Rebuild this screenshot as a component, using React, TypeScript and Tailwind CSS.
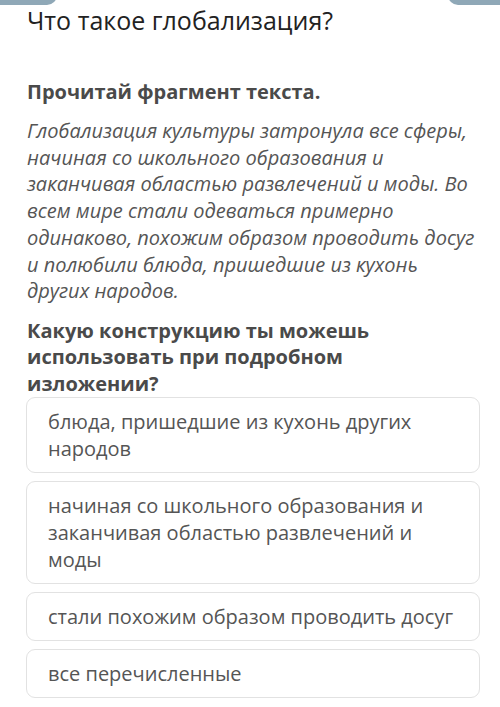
const options = [
  "блюда, пришедшие из кухонь других народов",
  "начиная со школьного образования и заканчивая областью развлечений и моды",
  "стали похожим образом проводить досуг",
  "все перечисленные",
];

export default function App() {
  return (
    <div className="relative w-[500px] h-[707px] overflow-hidden bg-white font-['Open_Sans',sans-serif]">
      {/* cut-off pills at the top edge */}
      <div className="absolute left-[-10px] top-[-20px] w-[67px] h-[25px] rounded-[10px] bg-[#8fa8b7]" />
      <div className="absolute right-[-10px] top-[-20px] w-[62px] h-[25px] rounded-[10px] bg-[#8fa8b7]" />

      <div className="pl-[27px] pr-[20px] pt-[5px]">
        <h1 className="text-[25px] leading-[30px] text-[#222]">Что такое глобализация?</h1>

        <p className="mt-[43px] text-[20px] leading-[27px] font-bold text-[#4a4a4a]">
          Прочитай фрагмент текста.
        </p>

        <p className="mt-[13px] text-[20px] leading-[26.7px] italic text-[#555]">
          Глобализация культуры затронула все сферы, начиная со школьного образования и
          заканчивая областью развлечений и моды. Во всем мире стали одеваться примерно
          одинаково, похожим образом проводить досуг и полюбили блюда, пришедшие из кухонь
          других народов.
        </p>

        <p className="mt-[13px] max-w-[420px] text-[20px] leading-[26.5px] font-bold text-[#4a4a4a]">
          Какую конструкцию ты можешь использовать при подробном изложении?
        </p>
      </div>

      <div className="flex flex-col gap-[8px] pl-[26px] pr-[20px]">
        {options.map((o) => (
          <div
            key={o}
            className="rounded-[9px] border border-[#e2e2e2] px-[21px] py-[10px] text-[20px] leading-[27px] text-[#555]"
          >
            {o}
          </div>
        ))}
      </div>
    </div>
  );
}
